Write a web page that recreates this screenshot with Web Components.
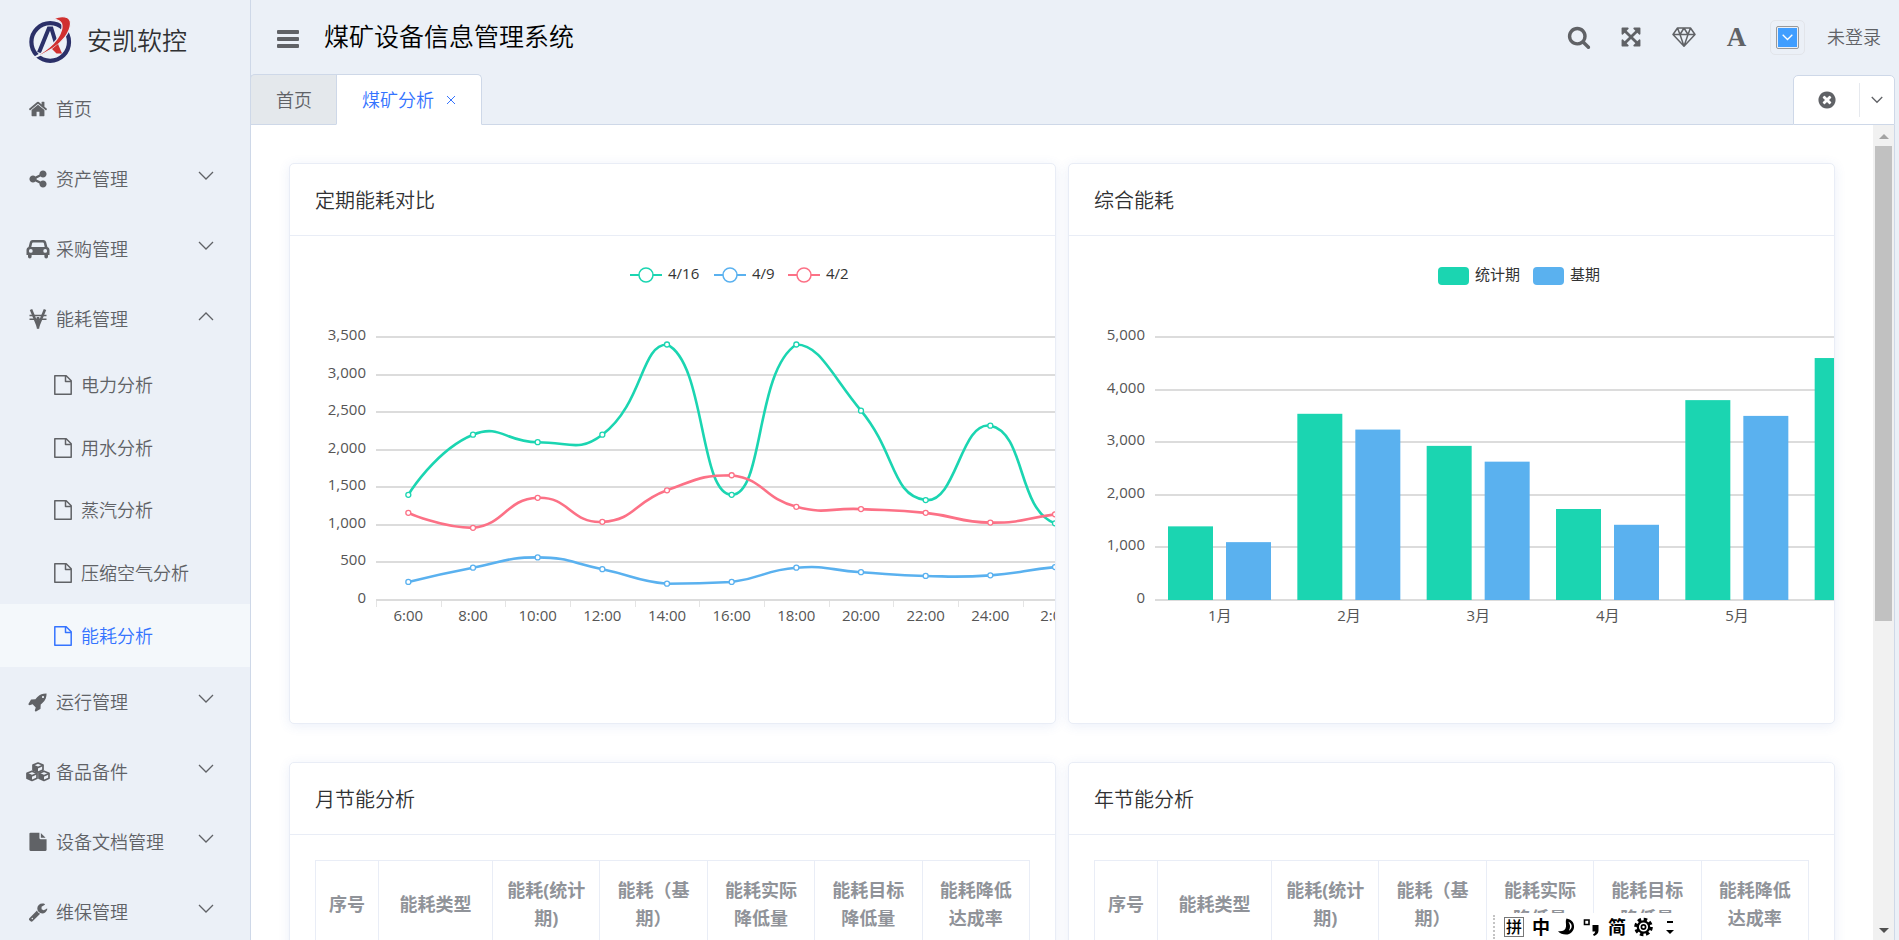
<!DOCTYPE html>
<html lang="zh-CN">
<head>
<meta charset="utf-8">
<title>煤矿设备信息管理系统</title>
<style>
  html, body { height: 100%; margin: 0; }
  body {
    --bg: #ebf0f7;
    --line: #ced8e8;
    --soft: #e9edf6;
    --text: #606266;
    --accent: #3574ff;
    font-family: "Noto Sans", "Noto Sans CJK SC", sans-serif;
    font-size: 18px;
    line-height: 28px;
    font-weight: 350;
    color: var(--text);
    background: var(--bg);
    overflow: hidden;
  }
</style>
</head>
<body>
<app-shell></app-shell>

<script>
// Base: each element sets its markup once, in an open shadow root
class BaseElement extends HTMLElement {
  constructor() {
    super();
    this.attachShadow({ mode: "open" });
  }
  connectedCallback() {
    this.shadowRoot.innerHTML = `<style>${this.styles()}</style>${this.markup()}`;
  }
  styles() { return ""; }
  markup() { return ""; }
}

// ---------- icons ----------

const FA = "0 0 1792 1792";

const ICONS = {
  home: [FA, `<path d="M1472 992v480q0 26-19 45t-45 19h-384v-384h-256v384h-384q-26 0-45-19t-19-45v-480q0-1 .5-3t.5-3l575-474 575 474q1 2 1 6zm223-69l-62 74q-8 9-21 11h-3q-13 0-21-7l-692-577-692 577q-12 8-24 7-13-2-21-11l-62-74q-8-10-7-23.5t11-21.5l719-599q32-26 76-26t76 26l244 204v-195q0-14 9-23t23-9h192q14 0 23 9t9 23v408l219 182q10 8 11 21.5t-7 23.5z"/>`],
  share: [FA, `<path d="M1344 1024q133 0 226.500 93.500t93.500 226.500-93.500 226.500-226.500 93.500-226.500-93.500-93.500-226.500q0-12 2-34l-360-180q-92 86-218 86-133 0-226.500-93.500t-93.500-226.500 93.500-226.500 226.500-93.500q126 0 218 86l360-180q-2-22-2-34 0-133 93.500-226.500t226.500-93.500 226.500 93.500 93.500 226.500-93.500 226.500-226.500 93.500q-126 0-218-86l-360 180q2 22 2 34t-2 34l360 180q92-86 218-86z"/>`],
  car: ["0 0 24 20", `<path fill-rule="evenodd" d="M6.500 1h11q2 0 2.600 2l1.300 5q2.100.4 2.100 2.800v5.200h-1.500v1.700a1.600 1.600 0 0 1-3.600 0V16H5.600v1.700a1.600 1.600 0 0 1-3.600 0V16H.5v-5.200Q.5 8.400 2.600 8L3.900 3Q4.500 1 6.500 1zM7 3.500q-.6 0-.8.6L5.300 8h13.400l-.9-3.900q-.2-.6-.8-.6zM4.800 10a1.900 1.900 0 1 0 0 3.800 1.900 1.900 0 0 0 0-3.800zm14.400 0a1.900 1.900 0 1 0 0 3.800 1.900 1.900 0 0 0 0-3.800z"/>`],
  energy: ["0 0 20 20", `<path fill="none" stroke="currentColor" stroke-width="2.600" d="M3 .5L10 17.500 17 .5"/><path d="M8.700 8h2.600v11.500H8.700z"/><path fill="none" stroke="currentColor" stroke-width="1.600" d="M1.500 6.500h17M1.500 10.200h17"/>`],
  rocket: [FA, `<path d="M1440 448q0-40-28-68t-68-28-68 28-28 68 28 68 68 28 68-28 28-68zm224-288q0 249-75.500 430.500t-253.500 360.500q-81 80-195 176l-20 379q-2 16-16 26l-384 224q-7 4-16 4-12 0-23-9l-64-64q-13-14-8-32l85-276-281-281-276 85q-3 1-9 1-14 0-23-9l-64-64q-17-19-5-39l224-384q10-14 26-16l379-20q96-114 176-195 188-187 358-258t431-71q14 0 24 9.500t10 22.500z"/>`],
  cubes: ["0 0 26 20", `<g fill="none" stroke="currentColor" stroke-width="1.700" stroke-linejoin="round">
    <path d="M13 1l5 2v5l-5 2.300L8 8V3z"/><path d="M8 3.200l5 2.300 5-2.300"/>
    <path d="M7 9.200l5 2v5l-5 2.300-5-2.300v-5z"/><path d="M2 11.400l5 2.300 5-2.300"/>
    <path d="M19 9.200l5 2v5l-5 2.300-5-2.300v-5z"/><path d="M14 11.400l5 2.300 5-2.300"/></g>
    <path d="M8 3l5 2.300V10L8 8zM2 11.300l5 2.300v4.700l-5-2.200zM14 11.300l5 2.300v4.700l-5-2.200z"/>`],
  file: [FA, `<path d="M1152 512v-412q22 14 36 28l348 348q14 14 28 36h-412zm-128 32q0 40 28 68t68 28h544v960q0 40-28 68t-68 28h-1344q-40 0-68-28t-28-68v-1440q0-40 28-68t68-28h800v476z"/>`],
  wrench: [FA, `<path d="M448 1472q0-26-19-45t-45-19-45 19-19 45 19 45 45 19 45-19 19-45zm644-420l-682 682q-37 37-90 37-52 0-91-37l-106-108q-38-36-38-90 0-53 38-91l681-681q39 98 114.500 173.500t173.500 114.500zm634-435q0 39-23 106-47 134-164.500 217.500t-258.500 83.500q-185 0-316.500-131.500t-131.500-316.500 131.500-316.500 316.500-131.500q58 0 121.500 16.500t107.500 46.500q16 11 16 28t-16 28l-293 169v224l193 107q5-3 79-48.500t135.500-81 70.500-35.500q15 0 23.500 10t8.500 25z"/>`],
  doc: ["0 0 20 20", `<path fill="none" stroke="currentColor" stroke-width="1.500" stroke-linejoin="round" d="M1.800.8h11.400l5 5v13.400H1.800zM12.500 1v5.500h5.500"/>`],
  search: [FA, `<path d="M1216 832q0-185-131.500-316.500t-316.500-131.500-316.500 131.500-131.500 316.500 131.500 316.500 316.500 131.500 316.500-131.500 131.500-316.500zm512 832q0 52-38 90t-90 38q-54 0-90-38l-343-342q-179 124-399 124-143 0-273.500-55.500t-225-150-150-225-55.500-273.500 55.500-273.500 150-225 225-150 273.500-55.500 273.500 55.500 225 150 150 225 55.500 273.500q0 220-124 399l343 343q37 37 37 90z"/>`],
  expand: [FA, `<path d="M1411 541l-355 355 355 355 144-144q29-31 70-14 39 17 39 59v448q0 26-19 45t-45 19h-448q-42 0-59-40-17-39 14-69l144-144-355-355-355 355 144 144q31 30 14 69-17 40-59 40h-448q-26 0-45-19t-19-45v-448q0-42 40-59 39-17 69 14l144 144 355-355-355-355-144 144q-19 19-45 19-12 0-24-5-40-17-40-59v-448q0-26 19-45t45-19h448q42 0 59 40 17 39-14 69l-144 144 355 355 355-355-144-144q-31-30-14-69 17-40 59-40h448q26 0 45 19t19 45v448q0 42-39 59-13 5-25 5-26 0-45-19z"/>`],
  gem: ["0 0 24 20", `<path fill="none" stroke="currentColor" stroke-width="1.500" stroke-linejoin="round" d="M5.500 1h13L23 7.500 12 19.200 1 7.500zM1 7.500h22M5.500 1L8 7.500 12 1l4 6.500L18.500 1M8 7.500l4 11.700 4-11.700"/>`],
  close: [FA, `<path d="M1277 1122q0-26-19-45l-181-181 181-181q19-19 19-45 0-27-19-46l-90-90q-19-19-46-19-26 0-45 19l-181 181-181-181q-19-19-45-19-27 0-46 19l-90 90q-19 19-19 46 0 26 19 45l181 181-181 181q-19 19-19 45 0 27 19 46l90 90q19 19 46 19 26 0 45-19l181-181 181 181q19 19 45 19 27 0 46-19l90-90q19-19 19-46zm387-226q0 209-103 385.500t-279.500 279.500-385.500 103-385.500-103-279.500-279.500-103-385.500 103-385.500 279.500-279.500 385.500-103 385.500 103 279.500 279.500 103 385.500z"/>`],
  bars: ["0 0 22 20", `<rect y="1" width="22" height="4" rx="1"/><rect y="8" width="22" height="4" rx="1"/><rect y="15" width="22" height="4" rx="1"/>`],
  down: ["0 0 16 10", `<path fill="none" stroke="currentColor" stroke-width="1.300" vector-effect="non-scaling-stroke" d="M1 1l7 7 7-7"/>`],
  up: ["0 0 16 10", `<path fill="none" stroke="currentColor" stroke-width="1.300" vector-effect="non-scaling-stroke" d="M1 9l7-7 7 7"/>`],
  cross: ["0 0 10 10", `<path fill="none" stroke="currentColor" d="M1 1l8 8M9 1l-8 8"/>`],
  logo: ["0 0 44 50", `<circle cx="21.700" cy="27" r="18.800" fill="none" stroke="#2b3068" stroke-width="4.200"/>
    <path fill="none" stroke="#2b3068" stroke-width="4" d="M10.500 37.500L20.300 13.500h2.600L28 30"/>
    <path stroke="#ebf0f7" stroke-width="1.200" fill="#d0302f" d="M2 44.500C14 38 29 29 33 15 34.800 8.500 32 5 25 4 33 0 42.500 1 42 9 41.500 18 33 28 24 33.500 17 38 9 42 2 44.500z"/>
    <path fill="#d0302f" d="M23.500 34l6-5 4 9.500h-5.500z"/>`],
  moon: ["0 0 18 20", `<path d="M9 1c5 1 8 4 8 8.500 0 5-4 8.500-8.500 8.500C5 18 2 17 0 14.500c5 .5 8-1 8.500-5C8.800 6 7.500 4 9 1z"/><path fill="#fff" d="M11 4.500c2 3 2.500 6 .5 9.500 1.500-.8 3-2.500 3-5C14.500 7 13 5.500 11 4.500z"/>`],
  punct: ["0 0 16 20", `<path fill="none" stroke="currentColor" stroke-width="1.600" d="M1 3h4.500v4.500H1z"/><path d="M9 8h6v5.500q0 3.500-4.500 5.500l-1-1.500q2-1 2.300-3H9z"/>`],
  gear: ["0 0 20 20", `<circle cx="10" cy="10" r="8" fill="none" stroke="currentColor" stroke-width="3.600" stroke-dasharray="3.600 2.680"/><circle cx="10" cy="10" r="6" fill="none" stroke="currentColor" stroke-width="2.400"/><circle cx="10" cy="10" r="2.200" fill="none" stroke="currentColor" stroke-width="1.800"/>`],
  more: ["0 0 8 20", `<path d="M1 4h6v2H1zM0 13h8l-4 4z"/>`]
};

class AppIcon extends BaseElement {
  styles() {
    return `
      :host { display: inline-flex; align-items: center; justify-content: center; flex: none; width: 20px; height: 20px; }
      svg { display: block; width: 100%; height: 100%; fill: currentColor; }
    `;
  }
  markup() {
    const [box, shape] = ICONS[this.getAttribute("name")];
    return `<svg viewBox="${box}" aria-hidden="true">${shape}</svg>`;
  }
}
customElements.define("app-icon", AppIcon);

// ---------- sidebar ----------

const MENU = [
  { icon: "home", text: "首页" },
  { icon: "share", text: "资产管理", arrow: "down" },
  { icon: "car", text: "采购管理", arrow: "down" },
  { icon: "energy", text: "能耗管理", arrow: "up", children: ["电力分析", "用水分析", "蒸汽分析", "压缩空气分析", "能耗分析"] },
  { icon: "rocket", text: "运行管理", arrow: "down" },
  { icon: "cubes", text: "备品备件", arrow: "down" },
  { icon: "file", text: "设备文档管理", arrow: "down" },
  { icon: "wrench", text: "维保管理", arrow: "down" }
];

class SideMenu extends BaseElement {
  styles() {
    return `
      :host { display: block; border-right: 1px solid var(--line); overflow: hidden; }
      .brand { display: flex; align-items: center; gap: 14px; height: 68px; padding: 6px 0 0 28px; color: #303133; font-size: 25px; }
      .brand app-icon { width: 45px; height: 50px; }
      .item {
        display: flex; align-items: center; gap: 6px; box-sizing: border-box;
        width: 100%; height: 70px; padding: 0 36px 0 26px;
        border: 0; background: none; font: inherit; color: inherit; text-align: left; text-decoration: none; cursor: pointer;
      }
      .item > span { flex: 1; }
      .icon { display: flex; justify-content: center; width: 24px; }
      .icon [name=car] { width: 24px; }
      .icon [name=cubes] { width: 26px; }
      .arrow { width: 16px; height: 10px; padding-bottom: 6px; }
      .sub { display: grid; grid-auto-rows: 1fr; height: 313px; }
      .sub .item { height: auto; padding-left: 51px; }
      .item.active { background: #f4f8fb; color: var(--accent); }
    `;
  }
  markup() {
    return `
      <div class="brand"><app-icon name="logo"></app-icon><span>安凯软控</span></div>
      <nav>
        ${MENU.map(m => m.arrow ? `
          <button class="item" type="button">
            <i class="icon"><app-icon name="${m.icon}"></app-icon></i><span>${m.text}</span>
            <app-icon class="arrow" name="${m.arrow}"></app-icon>
          </button>` : `
          <a class="item" href="#"><i class="icon"><app-icon name="${m.icon}"></app-icon></i><span>${m.text}</span></a>`)
          .map((html, i) => html + (MENU[i].children ? `
          <div class="sub">
            ${MENU[i].children.map(c => `
              <a class="item ${c === "能耗分析" ? "active" : ""}" href="#"><i class="icon"><app-icon name="doc"></app-icon></i><span>${c}</span></a>
            `).join("")}
          </div>` : "")).join("")}
      </nav>
    `;
  }
}
customElements.define("side-menu", SideMenu);

// ---------- header ----------

class TopBar extends BaseElement {
  styles() {
    return `
      :host { display: flex; align-items: center; height: 74px; padding: 0 18px 0 26px; }
      h1 { flex: 1; margin: 0 0 0 25px; padding-bottom: 2px; font-size: 25px; font-weight: 350; color: #000; }
      button { display: flex; align-items: center; justify-content: center; padding: 0; border: 0; background: none; font: inherit; color: inherit; cursor: pointer; }
      .bars { padding-top: 4px; }
      .bars app-icon { width: 22px; }
      .tools { display: flex; align-items: center; }
      .tools > button { width: 53px; height: 53px; }
      .tools [name=search] { width: 24px; height: 24px; padding-left: 3px; }
      .tools [name=expand] { width: 22px; height: 22px; }
      .tools [name=gem] { width: 24px; }
      .font { font-family: "Liberation Serif", serif; font-size: 27px; font-weight: 700; }
      .tools .color { width: 35px; height: 35px; margin: 0 22px 0 7px; border: 1px solid #e2e5ea; border-radius: 5px; }
      .swatch { display: flex; align-items: center; justify-content: center; box-sizing: border-box; width: 23px; height: 23px; padding: 1px; border: 1px solid #999; border-radius: 2px; background: #409eff; background-clip: content-box; color: #fff; }
      .swatch app-icon { width: 11px; height: 7px; }
    `;
  }
  markup() {
    return `
      <button class="bars" type="button" aria-label="折叠菜单"><app-icon name="bars"></app-icon></button>
      <h1>煤矿设备信息管理系统</h1>
      <div class="tools">
        <button type="button" aria-label="搜索"><app-icon name="search"></app-icon></button>
        <button type="button" aria-label="全屏"><app-icon name="expand"></app-icon></button>
        <button type="button" aria-label="主题"><app-icon name="gem"></app-icon></button>
        <button class="font" type="button" aria-label="字号">A</button>
        <button class="color" type="button" aria-label="颜色"><span class="swatch"><app-icon name="down"></app-icon></span></button>
        <span>未登录</span>
      </div>
    `;
  }
}
customElements.define("top-bar", TopBar);

class TabStrip extends BaseElement {
  styles() {
    return `
      :host { display: flex; justify-content: space-between; height: 51px; margin-left: -1px; }
      .tabs, .tools { display: flex; }
      .fill { flex: 1; border-bottom: 1px solid var(--line); }
      a {
        display: flex; align-items: center; gap: 12px; box-sizing: border-box; padding: 0 25px;
        border: 1px solid var(--line); border-right: 0; background: #e4e8ec;
        color: inherit; text-decoration: none;
      }
      a:first-child { padding-right: 24px; border-top-left-radius: 5px; }
      a.active { background: #fff; color: var(--accent); border-right: 1px solid var(--line); border-bottom-color: #fff; border-top-right-radius: 5px; }
      a app-icon { width: 10px; height: 10px; }
      .tools { box-sizing: border-box; height: 50px; align-self: flex-end; align-items: center; border: 1px solid var(--line); border-radius: 5px 5px 0 0; background: #fff; }
      button { display: flex; align-items: center; justify-content: center; height: 34px; padding: 0; border: 0; background: none; color: inherit; cursor: pointer; }
      .shut { width: 65px; }
      .more { width: 35px; border-left: 1px solid #e6e9ee; }
      .more app-icon { width: 12px; height: 8px; }
    `;
  }
  markup() {
    return `
      <nav class="tabs">
        <a href="#">首页</a>
        <a class="active" href="#">煤矿分析<app-icon name="cross"></app-icon></a>
      </nav>
      <div class="fill"></div>
      <div class="tools">
        <button class="shut" type="button" aria-label="关闭"><app-icon name="close"></app-icon></button>
        <button class="more" type="button" aria-label="更多"><app-icon name="down"></app-icon></button>
      </div>
    `;
  }
}
customElements.define("tab-strip", TabStrip);

// ---------- cards ----------

class PanelCard extends BaseElement {
  styles() {
    return `
      :host { display: block; box-sizing: border-box; min-width: 0; overflow: hidden; border: 1px solid var(--soft); border-radius: 5px; background: #fff; box-shadow: 0 2px 12px rgba(60, 100, 200, 0.1); }
      h2 { margin: 0; padding: 23px 25px 20px; border-bottom: 1px solid var(--soft); font-size: 20px; line-height: 28px; font-weight: 350; color: #303133; }
      .body { padding: 25px; }
    `;
  }
  markup() {
    return `<h2>${this.getAttribute("heading")}</h2><div class="body"><slot></slot></div>`;
  }
}
customElements.define("panel-card", PanelCard);

// ---------- charts ----------

const PLOT = { left: 61, top: 76, width: 776, height: 263 };
const GREEN = "#1bd5b1", BLUE = "#5ab1ef", RED = "#fc7186";

class BaseChart extends BaseElement {
  styles() {
    return `
      :host { display: block; }
      svg { display: block; }
      text { font-family: "Open Sans", "Noto Sans CJK SC", sans-serif; font-size: 15px; font-weight: 400; fill: #555; }
      .legend text { fill: #333; }
    `;
  }
  y(v) { return PLOT.top + PLOT.height * (1 - v / this.max); }
  grid() {
    let out = "";
    for (let v = 0; v <= this.max; v += this.step) {
      const y = Math.round(this.y(v));
      out += `<path d="M${PLOT.left} ${y}h${PLOT.width}" stroke="#dcdcdc" stroke-width="2"/>
        <text x="51" y="${y + 3}" text-anchor="end">${v.toLocaleString("en-US")}</text>`;
    }
    return out;
  }
  labels(names) {
    const step = PLOT.width / names.length;
    return names.map((n, i) => `<text x="${PLOT.left + step * (i + 0.5)}" y="360" text-anchor="middle">${n}</text>`).join("");
  }
  svg(inner) {
    return `<svg width="850" height="437" role="img">${inner}</svg>`;
  }
}

class LineChart extends BaseChart {
  max = 3500;
  step = 500;
  names = ["6:00", "8:00", "10:00", "12:00", "14:00", "16:00", "18:00", "20:00", "22:00", "24:00", "2:00", "4:00"];
  series = [
    { name: "4/16", color: GREEN, x: 315, data: [1400, 2200, 2100, 2200, 3400, 1400, 3400, 2520, 1330, 2320, 1020, 1700] },
    { name: "4/9", color: BLUE, x: 399, data: [240, 430, 567, 410, 217, 240, 430, 370, 320, 328, 438, 480] },
    { name: "4/2", color: RED, x: 473, data: [1160, 960, 1360, 1040, 1460, 1660, 1240, 1210, 1160, 1030, 1140, 1250] }
  ];

  // Bezier through the points, control points kept inside the series' bounds
  curve(pts) {
    const ys = pts.map(p => p[1]);
    const lo = Math.min(...ys), hi = Math.max(...ys);
    const clamp = v => Math.min(hi, Math.max(lo, v));
    let d = `M${pts[0]}`;
    let cp0 = pts[0];
    for (let i = 1; i < pts.length; i++) {
      const p = pts[i], prev = pts[i - 1], next = pts[i + 1];
      if (!next) { d += `C${cp0} ${p} ${p}`; break; }
      const vx = next[0] - prev[0], vy = next[1] - prev[1];
      const a = Math.hypot(p[0] - prev[0], p[1] - prev[1]);
      const b = Math.hypot(next[0] - p[0], next[1] - p[1]);
      const r = b / (a + b);
      const cp1 = [p[0] - vx * 0.5 * (1 - r), clamp(p[1] - vy * 0.5 * (1 - r))];
      d += `C${cp0} ${cp1} ${p}`;
      cp0 = [p[0] + vx * 0.5 * r, clamp(p[1] + vy * 0.5 * r)];
    }
    return d;
  }

  markup() {
    const step = PLOT.width / this.names.length;
    const ticks = this.names.map((_, i) => `<path d="M${Math.round(PLOT.left + i * step) + 0.5} 340v6" stroke="#e4e4e4"/>`).join("");
    const lines = this.series.map(s => {
      const pts = s.data.map((v, i) => [PLOT.left + step * (i + 0.5), this.y(v)]);
      return `<path d="${this.curve(pts)}" fill="none" stroke="${s.color}" stroke-width="2.600"/>
        ${pts.map(p => `<circle cx="${p[0]}" cy="${p[1]}" r="2.500" fill="#fff" stroke="${s.color}" stroke-width="1.300"/>`).join("")}`;
    }).join("");
    const legend = this.series.map(s => `
      <path d="M${s.x} 14h32" stroke="${s.color}" stroke-width="2"/>
      <circle cx="${s.x + 16}" cy="14" r="7" fill="#fff" stroke="${s.color}" stroke-width="1.500"/>
      <text x="${s.x + 38}" y="18">${s.name}</text>`).join("");
    return this.svg(this.grid() + ticks + this.labels(this.names) + lines + `<g class="legend">${legend}</g>`);
  }
}
customElements.define("line-chart", LineChart);

class BarChart extends BaseChart {
  max = 5000;
  step = 1000;
  names = ["1月", "2月", "3月", "4月", "5月", "6月"];
  series = [
    { name: "统计期", color: GREEN, x: 344, data: [1400, 3540, 2930, 1730, 3800, 4600] },
    { name: "基期", color: BLUE, x: 439, data: [1100, 3240, 2630, 1430, 3500, 4300] }
  ];

  markup() {
    const step = PLOT.width / this.names.length;
    const bars = this.series.map((s, k) => s.data.map((v, i) => {
      const x = PLOT.left + step * i + 13 + k * 58;
      const y = this.y(v);
      return `<rect x="${x}" y="${y}" width="45" height="${PLOT.top + PLOT.height - y}" fill="${s.color}"/>`;
    }).join("")).join("");
    const legend = this.series.map(s => `
      <rect x="${s.x}" y="6" width="31" height="18" rx="4" fill="${s.color}"/>
      <text x="${s.x + 37}" y="19">${s.name}</text>`).join("");
    return this.svg(this.grid() + this.labels(this.names) + bars + `<g class="legend">${legend}</g>`);
  }
}
customElements.define("bar-chart", BarChart);

// ---------- table ----------

class EnergyTable extends BaseElement {
  styles() {
    return `
      :host { display: block; }
      table { width: 100%; table-layout: fixed; border-collapse: collapse; border: 1px solid var(--soft); }
      th { height: 56px; padding: 15px 12px; border: 1px solid var(--soft); font-size: 18px; line-height: 28px; font-weight: 700; color: #909399; }
      th:nth-child(1) { width: 38px; }
      th:nth-child(2) { width: 89px; }
    `;
  }
  markup() {
    const cols = ["序号", "能耗类型", "能耗(统计期)", "能耗（基期）", "能耗实际降低量", "能耗目标降低量", "能耗降低达成率"];
    return `<table><thead><tr>${cols.map(c => `<th scope="col">${c}</th>`).join("")}</tr></thead></table>`;
  }
}
customElements.define("energy-table", EnergyTable);

// ---------- input method bar, floats over the page ----------

class ImeBar extends BaseElement {
  styles() {
    return `
      :host { position: absolute; right: 219px; bottom: 0; display: flex; align-items: center; gap: 8px; height: 27px; padding: 0 6px 0 3px; background: #fff; color: #000; font-size: 18px; line-height: 20px; font-weight: 700; }
      .grip { height: 24px; border-left: 2px dotted #c4c4c4; margin-right: 1px; }
      .box { border: 1px solid #777; font-size: 16px; line-height: 18px; padding: 0 1px; font-weight: 500; }
      app-icon { width: 17px; }
      [name=more] { width: 8px; margin-left: 5px; }
      [name=gear] { width: 19px; }
    `;
  }
  markup() {
    return `
      <i class="grip"></i><span class="box">拼</span><span>中</span>
      <app-icon name="moon"></app-icon><app-icon name="punct"></app-icon>
      <span>简</span><app-icon name="gear"></app-icon><app-icon name="more"></app-icon>
    `;
  }
}
customElements.define("ime-bar", ImeBar);

// ---------- shell ----------

class AppShell extends BaseElement {
  styles() {
    return `
      :host { position: relative; display: grid; grid-template-columns: 251px minmax(0, 1fr); height: 100vh; overflow: hidden; }
      .page { display: flex; flex-direction: column; min-height: 0; }
      side-menu { min-height: 0; }
      tab-strip { margin-right: 4px; }
      .view { display: flex; flex: 1; min-height: 0; margin-right: 4px; border-right: 1px solid var(--line); background: #fff; }
      main { flex: 1; display: grid; grid-template-columns: repeat(2, minmax(0, 1fr)); grid-auto-rows: max-content; align-content: start; gap: 38px 12px; padding: 38px; min-width: 0; overflow: hidden; }
      .bar { display: flex; flex-direction: column; align-items: center; width: 21px; background: #f1f1f1; }
      .bar i { border: 5px solid transparent; margin: 4px 0 7px; border-bottom-color: #a3a3a3; }
      .bar b { flex: 476; width: 17px; background: #c1c1c1; }
      .bar u { flex: 300; }
      .bar i:last-child { border-color: #505050 transparent transparent; margin: 8px 0 2px; }
    `;
  }
  markup() {
    return `
      <side-menu></side-menu>
      <div class="page">
        <top-bar></top-bar>
        <tab-strip></tab-strip>
        <div class="view">
          <main>
            <panel-card heading="定期能耗对比"><line-chart></line-chart></panel-card>
            <panel-card heading="综合能耗"><bar-chart></bar-chart></panel-card>
            <panel-card heading="月节能分析"><energy-table></energy-table></panel-card>
            <panel-card heading="年节能分析"><energy-table></energy-table></panel-card>
          </main>
          <div class="bar" aria-hidden="true"><i></i><b></b><u></u><i></i></div>
        </div>
      </div>
      <ime-bar></ime-bar>
    `;
  }
}
customElements.define("app-shell", AppShell);
</script>
</body>
</html>
